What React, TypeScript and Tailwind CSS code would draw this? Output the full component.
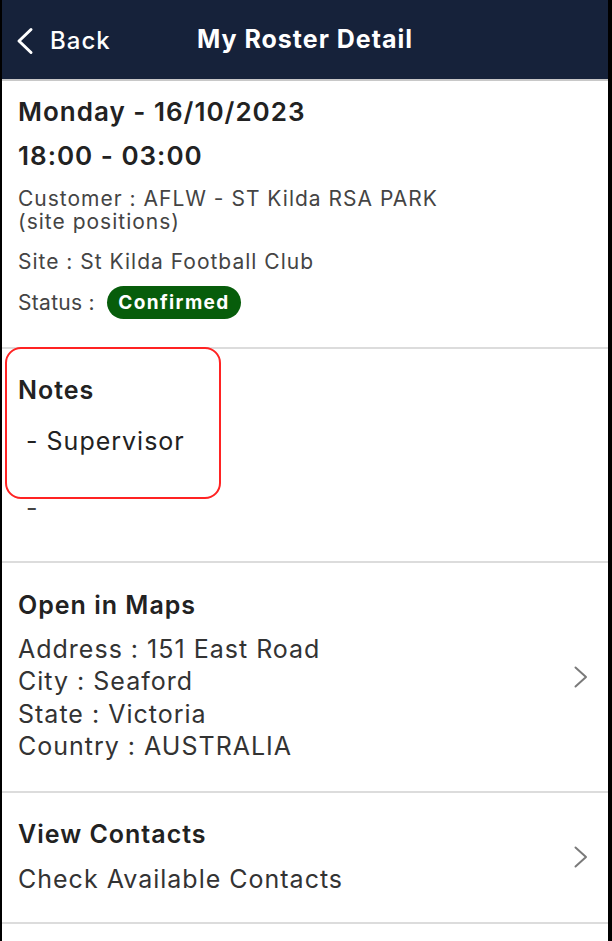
const font = { fontFamily: "Inter, 'Liberation Sans', sans-serif" }

function Chevron() {
	return (
		<svg width="16" height="24" viewBox="0 0 16 24" fill="none" className="shrink-0">
			<polyline points="2.5,2.5 13,12 2.5,21.5" stroke="#7a7a7a" strokeWidth="2" strokeLinecap="round" strokeLinejoin="round" />
		</svg>
	)
}

function Row({ children, arrow }: { children: React.ReactNode; arrow?: boolean }) {
	return (
		<div className="flex items-center border-b-2 border-[#dcdcdc] pr-[19px]">
			<div className="flex-1">{children}</div>
			{arrow && <Chevron />}
		</div>
	)
}

export default function App() {
	return (
		<div className="flex h-[941px] bg-black tracking-[1px]" style={font}>
			<div className="ml-[2px] mr-[4px] flex flex-1 flex-col bg-white">
				<header className="relative flex h-[81px] shrink-0 items-center justify-center border-b-2 border-[#c8c8c8] bg-[#16223a] text-white">
					<div className="absolute left-[13px] top-[27px] flex items-center">
						<svg width="20" height="28" viewBox="0 0 20 28" fill="none">
							<polyline points="16,2.5 4,14 16,25.5" stroke="white" strokeWidth="3" strokeLinecap="round" strokeLinejoin="round" />
						</svg>
						<span className="ml-[15px] text-[24px] font-medium leading-[28px]">Back</span>
					</div>
					<h1 className="text-[25px] font-bold">My Roster Detail</h1>
				</header>

				<Row>
					<div className="px-[16px] pb-[28px] pt-[14px] text-[#222]">
						<p className="text-[26px] font-semibold leading-[34px]">Monday - 16/10/2023</p>
						<p className="mt-[10px] text-[26px] font-semibold leading-[34px]">18:00 - 03:00</p>
						<div className="mt-[14px] text-[21px] leading-[23px] text-[#444]">
							<p>Customer : AFLW - ST Kilda RSA PARK</p>
							<p>(site positions)</p>
							<p className="mt-[17px]">Site : St Kilda Football Club</p>
							<div className="mt-[13px] flex items-center">
								<span className="tracking-[0.3px]">Status :</span>
								<span className="ml-[12px] flex h-[33px] w-[134px] items-center justify-center rounded-full bg-[#075d0b] text-[19px] font-bold tracking-[1.4px] text-white">
									Confirmed
								</span>
							</div>
						</div>
					</div>
				</Row>

				<Row>
					<div className="relative px-[16px] pb-[37px] pt-[25px]">
						<p className="text-[25px] font-semibold leading-[32px] text-[#222]">Notes</p>
						<p className="mt-[19px] whitespace-pre text-[25px] leading-[32px] text-[#222]"> - Supervisor</p>
						<p className="mt-[35px] whitespace-pre text-[25px] leading-[32px] text-[#444]"> -</p>
						<div className="pointer-events-none absolute left-[3px] top-[-2px] h-[152px] w-[216px] rounded-[16px] border-2 border-[#ff2323]" />
					</div>
				</Row>

				<Row arrow>
					<div className="px-[16px] pb-[28px] pt-[26px]">
						<p className="text-[25px] font-semibold leading-[32px] text-[#222]">Open in Maps</p>
						<div className="mt-[12px] text-[25px] leading-[32.4px] text-[#333]">
							<p>Address : 151 East Road</p>
							<p>City : Seaford</p>
							<p>State : Victoria</p>
							<p>Country : AUSTRALIA</p>
						</div>
					</div>
				</Row>

				<Row arrow>
					<div className="px-[16px] pb-[27px] pt-[25px]">
						<p className="text-[25px] font-semibold leading-[32px] text-[#222]">View Contacts</p>
						<p className="mt-[13px] text-[25px] leading-[32px] text-[#333]">Check Available Contacts</p>
					</div>
				</Row>
			</div>
		</div>
	)
}
